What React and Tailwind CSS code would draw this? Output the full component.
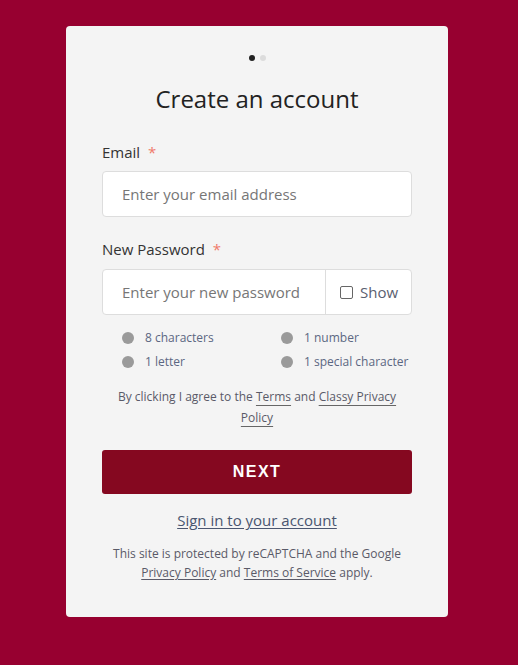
import React from "react";

export default function App() {
  const reqs = ["8 characters", "1 number", "1 letter", "1 special character"];
  return (
    <div
      className="min-h-[665px] w-full bg-[#970030] pt-[26px] pb-[48px]"
      style={{ fontFamily: '"Open Sans", sans-serif' }}
    >
      <div className="ml-[66px] w-[382px] rounded-[4px] bg-[#f4f4f4] px-[36px] pt-[29px] pb-[35px]">
        <div className="flex justify-center gap-[5px]">
          <span className="h-[6px] w-[6px] rounded-full bg-[#222]" />
          <span className="h-[6px] w-[6px] rounded-full bg-[#dcdcdc]" />
        </div>
        <h1 className="mt-[22px] text-center text-[24px] leading-[32px] text-[#222]">
          Create an account
        </h1>

        <label className="mt-[25px] block text-[15px] leading-[24px] text-[#333]">
          Email <span className="ml-[4px] text-[#f07a6a]">*</span>
        </label>
        <div className="mt-[7px] flex h-[46px] items-center rounded-[4px] border border-[#dddddd] bg-white px-[19px]">
          <span className="text-[15px] text-[#767676]">Enter your email address</span>
        </div>

        <label className="mt-[20px] block text-[15px] leading-[24px] text-[#333]">
          New Password <span className="ml-[4px] text-[#f07a6a]">*</span>
        </label>
        <div className="mt-[8px] flex h-[46px] items-stretch rounded-[4px] border border-[#dddddd] bg-white">
          <div className="flex flex-1 items-center whitespace-nowrap border-r border-[#dddddd] px-[19px]">
            <span className="text-[15px] text-[#767676]">Enter your new password</span>
          </div>
          <div className="flex w-[85px] items-center gap-[7px] pl-[14px]">
            <span className="h-[13px] w-[13px] rounded-[2px] border border-[#666] bg-white" />
            <span className="text-[15px] text-[#5a6070]">Show</span>
          </div>
        </div>

        <div className="mt-[14px] grid grid-cols-[159px_1fr] gap-y-[6px] pl-[20px]">
          {reqs.map((r) => (
            <div key={r} className="flex h-[18px] items-center gap-[11px]">
              <span className="h-[12px] w-[12px] rounded-full bg-[#9a9a9a]" />
              <span className="text-[12px] text-[#5b6782]">{r}</span>
            </div>
          ))}
        </div>

        <p className="mt-[15px] text-center text-[12px] leading-[21px] text-[#5a5a68]">
          By clicking I agree to the{" "}
          <a className="underline decoration-[#666] underline-offset-4">Terms</a> and{" "}
          <a className="underline decoration-[#666] underline-offset-4">Classy Privacy Policy</a>
        </p>

        <button
          className="mt-[22px] flex h-[44px] w-full items-center justify-center rounded-[3px] bg-[#850820] text-[16px] font-bold tracking-[1.5px] text-white"
          style={{ fontFamily: '"Liberation Sans", Arial, sans-serif' }}
        >
          NEXT
        </button>

        <div className="mt-[14px] text-center text-[15px] leading-[24px]">
          <a className="text-[#4a5670] underline underline-offset-2">Sign in to your account</a>
        </div>

        <p className="mt-[12px] text-center text-[12px] leading-[19px] text-[#5a5a68]">
          This site is protected by reCAPTCHA and the Google{" "}
          <a className="underline underline-offset-2">Privacy Policy</a> and{" "}
          <a className="underline underline-offset-2">Terms of Service</a> apply.
        </p>
      </div>
    </div>
  );
}
